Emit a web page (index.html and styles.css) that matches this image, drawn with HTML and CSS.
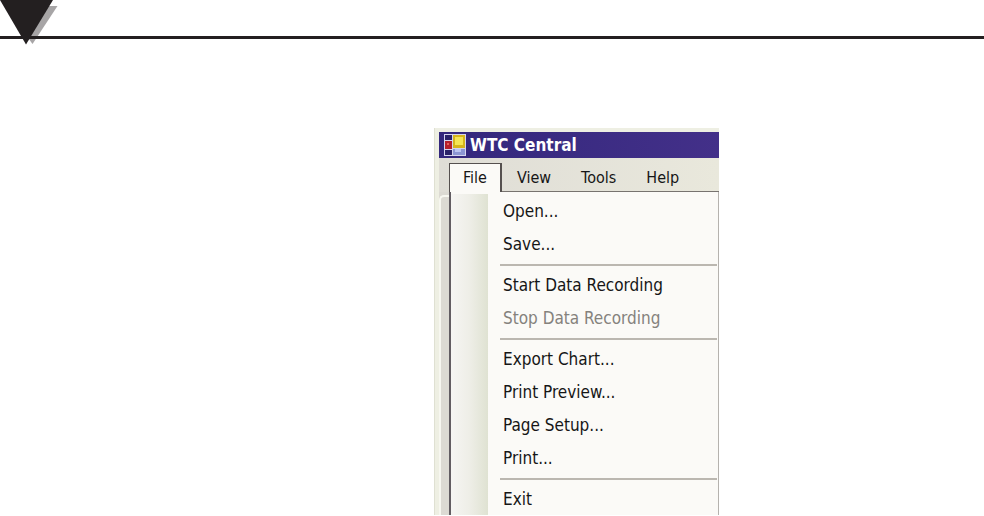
FILE: index.html
```
<!DOCTYPE html>
<html lang="en">
<head>
    <meta charset="UTF-8">
    <meta name="viewport" content="width=device-width, initial-scale=1.0">
    <title>WTC Central</title>
    <link rel="stylesheet" href="styles.css">
</head>
<body>
    <header class="page-head">
        <svg class="marker" width="60" height="46" viewBox="0 0 60 46" aria-hidden="true">
            <path fill="#a7a5a6" d="M5 6H57.500L32.500 44Z"/>
            <path fill="#231f20" d="M0 36H60V39H0Z"/>
            <path fill="#231f20" d="M0 0H53L26 44.500Z"/>
        </svg>
        <div class="rule"></div>
    </header>

    <main class="figure">
        <section class="window">
            <div class="titlebar">
                <svg width="22" height="22" viewBox="0 0 22 22" aria-hidden="true">
                    <path fill="#d5d5ee" d="M0 0H22V22H0Z"/>
                    <path fill="#2a2268" d="M1 1H8V6H1Z"/>
                    <path fill="#b51f2b" d="M1 7H8V15H1Z"/>
                    <path fill="#e5605a" d="M3 9H5V11H3Z"/>
                    <path fill="#2a2268" d="M1 16H8V21H1Z"/>
                    <path fill="#d6b51c" d="M9 1H21V14H9Z"/>
                    <path fill="#f5e653" d="M11 3H19V11H11Z"/>
                    <path fill="#8c96d3" d="M9 15H21V21H9Z"/>
                    <path fill="#bcc5f1" d="M11 15H17V18H11Z"/>
                </svg>
                <h1>WTC Central</h1>
            </div>
            <nav class="menubar">
                <button class="menu open" type="button">File</button>
                <button class="menu" type="button">View</button>
                <button class="menu" type="button">Tools</button>
                <button class="menu" type="button">Help</button>
            </nav>
            <div class="content">
                <div class="tab-edge"></div>
                <div class="dropdown">
                    <div class="gutter"></div>
                    <div class="items">
                        <button type="button">Open...</button>
                        <button type="button">Save...</button>
                        <hr>
                        <button type="button">Start Data Recording</button>
                        <button type="button" disabled>Stop Data Recording</button>
                        <hr>
                        <button type="button">Export Chart...</button>
                        <button type="button">Print Preview...</button>
                        <button type="button">Page Setup...</button>
                        <button type="button">Print...</button>
                        <hr>
                        <button type="button">Exit</button>
                    </div>
                </div>
            </div>
        </section>
    </main>
</body>
</html>
```
FILE: styles.css
```
*{
    box-sizing: border-box;
}
body{
    margin: 0;
    background-color: white;
    font-family: "DejaVu Sans Condensed", "DejaVu Sans", sans-serif;
}
.page-head{
    display: flex;
    margin-bottom: 82px;
}
.marker{
    display: block;
    flex: none;
}
.rule{
    flex: 1;
    height: 3px;
    margin-top: 36px;
    background-color: #231f20;
}
.figure{
    display: grid;
    grid-template-columns: 434fr 285fr 265fr;
}
.window{
    grid-column: 2;
    padding-top: 4px;
    background-color: #eeefe3;
    border-left: 1px solid #dfe0d2;
}
.titlebar{
    display: flex;
    align-items: center;
    gap: 4px;
    height: 26px;
    margin-left: 4px;
    padding-left: 5px;
    background: linear-gradient(to right, #33277c, #433089);
    color: white;
}
.titlebar h1{
    margin: 0;
    font-size: 17px;
    line-height: 24px;
    font-weight: bold;
}
.menubar{
    display: flex;
    height: 34px;
    margin-left: 4px;
    padding: 5px 0 0 10px;
    background: linear-gradient(to right, #dfddd6, #e9e8dc);
}
button{
    margin: 0;
    border: none;
    background: none;
    color: #161616;
    font: inherit;
    font-size: 16px;
    text-align: left;
}
.menu{
    padding: 0 15px;
    border-bottom: 1px solid #77736f;
}
.menu:last-child{
    flex: 1;
}
.menu.open{
    padding: 0 13px 1px;
    border: 1px solid #55504f;
    border-width: 1px 2px 0 1px;
    background-color: #fbfaf7;
}
.content{
    display: flex;
    margin-left: 4px;
    background-color: #dcdad3;
}
.tab-edge{
    width: 10px;
    margin-top: 3px;
    border: 2px solid #f7f7f0;
    border-width: 2px 0 0 2px;
    border-top-left-radius: 5px;
}
.dropdown{
    display: flex;
    flex: 1;
    border-left: 2px solid #625d62;
    border-right: 1px solid #b5b2ae;
    background-color: #fbfaf7;
}
.gutter{
    width: 37px;
    margin-top: 2px;
    background: linear-gradient(to right, #f6f5f3, #eeeee7 50%, #dfe2d2);
}
.items{
    display: flex;
    flex: 1;
    flex-direction: column;
    padding: 2px 1px 0 12px;
}
.items button{
    height: 33px;
    padding: 0 3px;
    font-size: 17px;
}
.items button:disabled{
    color: #85827d;
}
.items hr{
    width: 100%;
    height: 2px;
    margin: 4px 0 2px;
    border: none;
    background-color: #bbb7b0;
}
```
